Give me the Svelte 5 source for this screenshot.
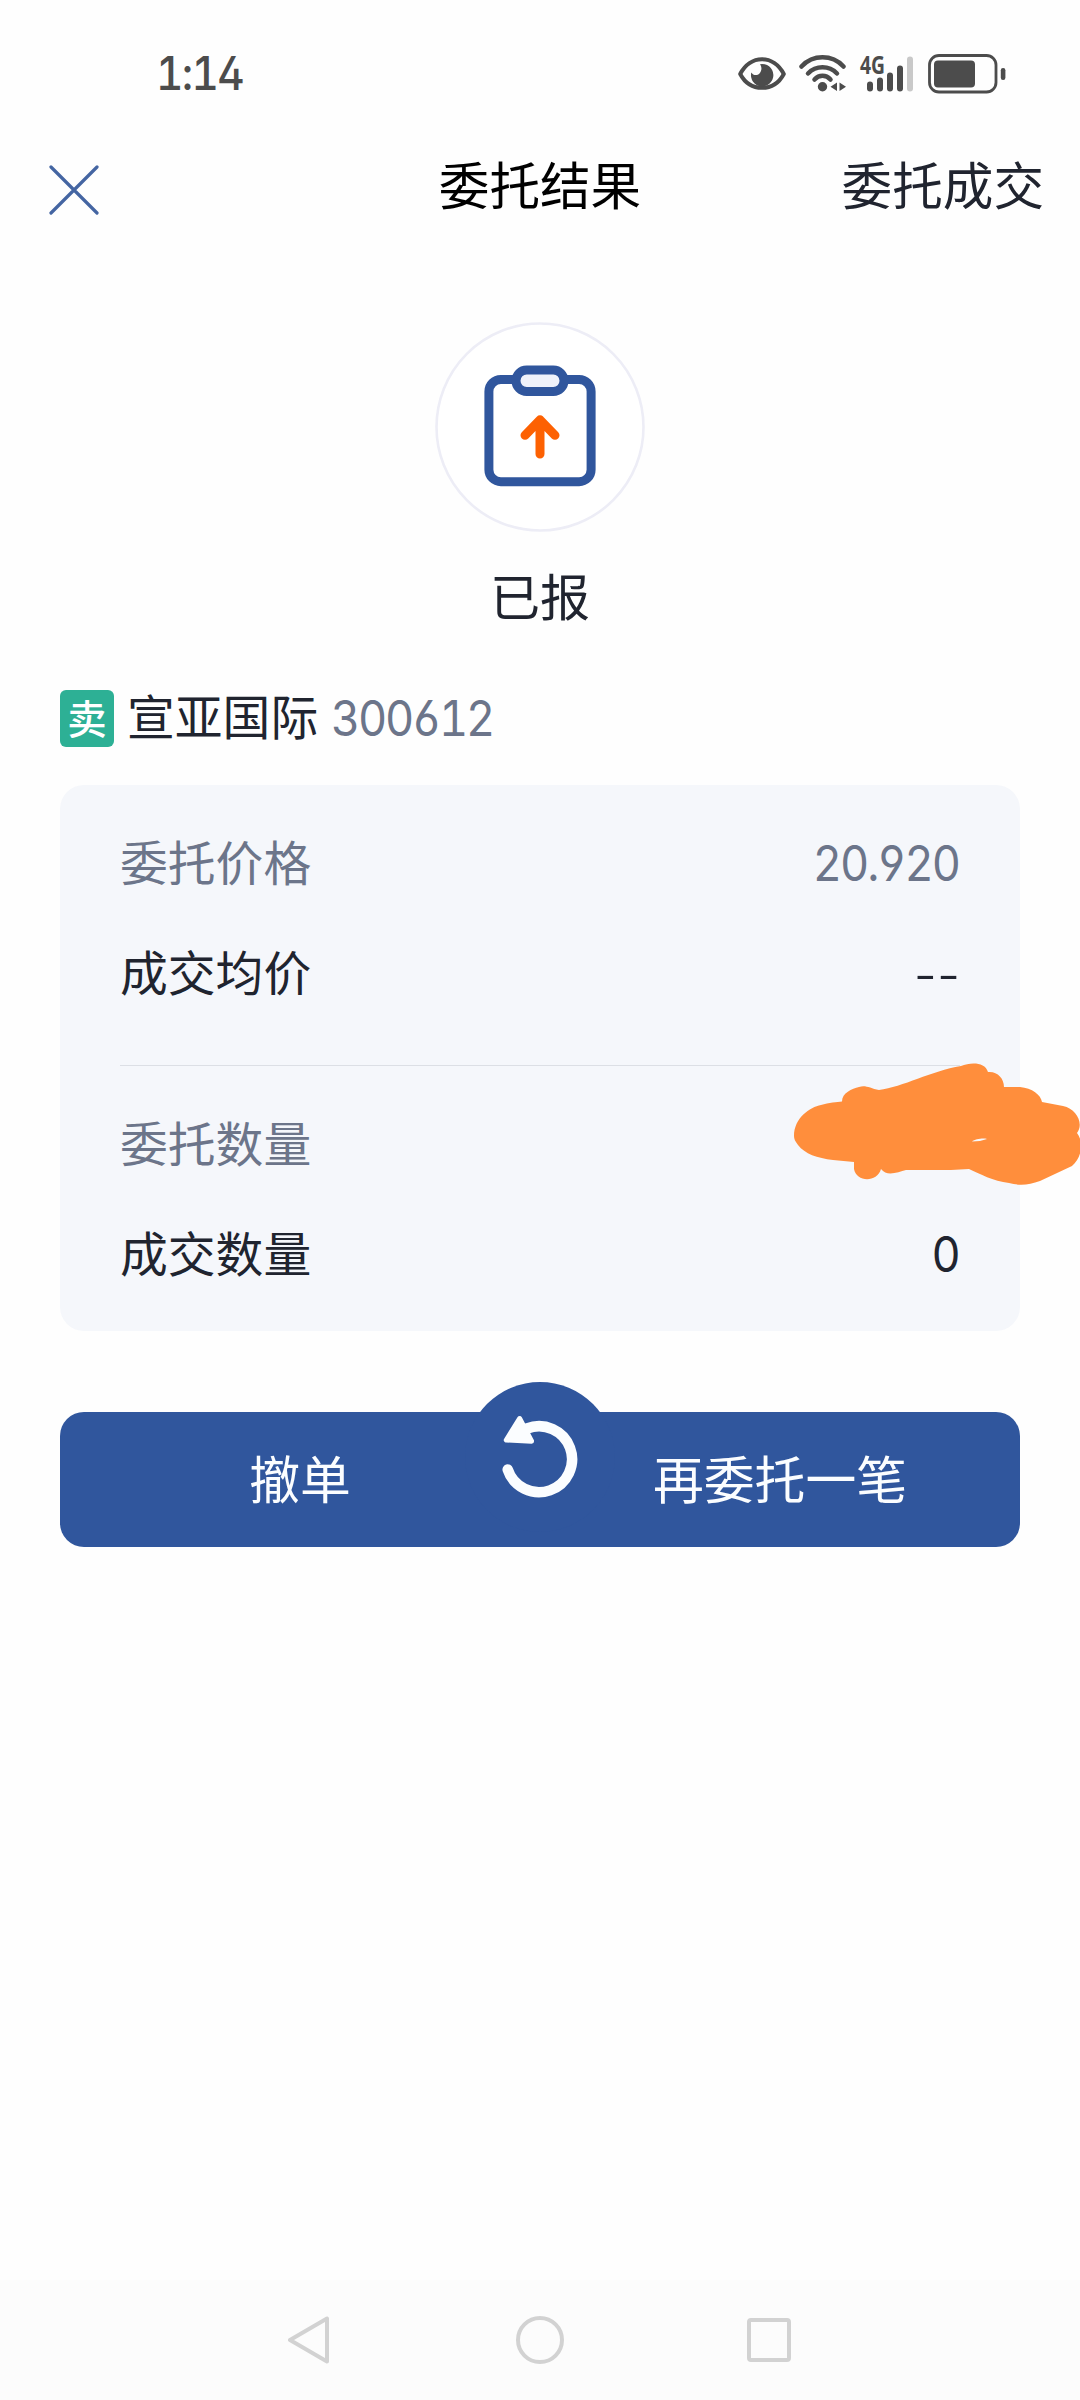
<script lang="ts">
  const groups = [
    [
      { label: '委托价格', value: '20.920', muted: true },
      { label: '成交均价', value: '--', muted: false }
    ],
    [
      { label: '委托数量', value: '', muted: true },
      { label: '成交数量', value: '0', muted: false }
    ]
  ];
</script>

<div class="screen">
  <div class="status">
    <span class="time num">1:14</span>
    <div class="indicators">
      <svg class="eye" width="48" height="34" viewBox="0 0 48 34">
        <path d="M2.2 17C7 8 15 2.2 24 2.2S41 8 45.8 17C41 26 33 30.8 24 30.8S7 26 2.2 17Z" fill="none" stroke="#4c4c4c" stroke-width="4" stroke-linejoin="round" />
        <path d="M22 7.2A11.2 11.2 0 1 1 13.3 15.5C15 18.5 19 19 21.5 16.5C24 13.8 24 10 22 7.2Z" fill="#4c4c4c" />
      </svg>
      <svg class="wifi" width="48" height="38" viewBox="0 0 48 38">
        <g fill="none" stroke="#4c4c4c" stroke-width="4.5" stroke-linecap="round">
          <path d="M2.5 11.5C14 -.7 33 -.7 44.5 11.5" />
          <path d="M9 18.500C17 10.3 30 10.3 38 18.5" />
          <path d="M15.5 24.5C20 19.5 27 19.5 31.5 24.5" />
        </g>
        <circle cx="23.5" cy="31.8" r="4.7" fill="#4c4c4c" />
        <path d="M38 27.500V36L31.5 31.8ZM40.5 27.500V36L47 31.8Z" fill="#4c4c4c" />
      </svg>
      <svg class="signal" width="56" height="38" viewBox="0 0 56 38">
        <text x="1" y="18.5" class="net" textLength="25" lengthAdjust="spacingAndGlyphs">4G</text>
        <g stroke="#4c4c4c" stroke-width="6" stroke-linecap="round">
          <path d="M11 29.500V33.500M21 25.500V33.500M31 20.500V33.500M41 13.500V33.500" />
          <path d="M51 4.500V33.500" stroke="#c9c9c9" />
        </g>
      </svg>
      <svg class="battery" width="78" height="40" viewBox="0 0 78 40">
        <rect x="1.5" y="1.5" width="66.5" height="36.5" rx="9.5" fill="none" stroke="#4c4c4c" stroke-width="2.8" />
        <rect x="6" y="6.500" width="41" height="27" rx="4" fill="#4c4c4c" />
        <rect x="72.8" y="14" width="4.6" height="12" rx="2.2" fill="#4c4c4c" />
      </svg>
    </div>
  </div>

  <header>
    <svg class="close" width="50" height="50" viewBox="0 0 50 50">
      <path d="M2 2L48 48M48 2L2 48" stroke="#4465a2" stroke-width="3.2" stroke-linecap="round" />
    </svg>
    <h1>委托结果</h1>
    <span class="link">委托成交</span>
  </header>

  <section class="result">
    <svg width="210" height="210" viewBox="0 0 210 210">
      <circle cx="105" cy="105" r="103.5" fill="#fff" stroke="#ededf6" stroke-width="2.6" />
      <rect x="53.9" y="57.5" width="102.2" height="102.2" rx="12" fill="none" stroke="#30569d" stroke-width="9" />
      <rect x="81" y="48" width="48" height="21.5" rx="10.7" fill="#eff2fa" stroke="#30569d" stroke-width="9" />
      <path d="M105 98.500V132M90 113.300L105 97.800L120 113.300" fill="none" stroke="#fd6102" stroke-width="9" stroke-linecap="round" stroke-linejoin="round" />
    </svg>
    <p>已报</p>
  </section>

  <div class="stock">
    <span class="badge">卖</span>
    <span class="name">宣亚国际</span>
    <span class="code num">300612</span>
  </div>

  <div class="card">
    {#each groups as rows}
      <div class="group">
        {#each rows as row}
          <div class="row" class:muted={row.muted}>
            <span class="label">{row.label}</span>
            {#if row.value === '--'}
              <span class="dashes">--</span>
            {:else}
              <span class="num">{row.value}</span>
            {/if}
          </div>
        {/each}
      </div>
    {/each}
    <svg class="scribble" width="288" height="124" viewBox="0 0 288 124">
      <path fill="#ff8e3c" fill-rule="evenodd" d="M1 70C1 52 17 41 28 39C36 36.500 44 36 49 35.500C49 27 59 22.500 66 21C72 18.500 77 22 86 24C110 21 138 5 168 0C178 -4 192 -4 195 6C204 5 211 12 211 21H227C239 22 248 29 249 36L270 40C284 43 291 58 284 67C291 76 289 91 279 100L247 115C236 119 227 120 216 117C200 115 187 108 176 103L158 104H113C105 106 94 111 88 103C84 117 63 116 61 103V96L40 94C24 92 12 88 5 79C2 75 1 73 1 70ZM179 75.500L187 75L194 73C190 72 182 73 179 75.500Z" />
    </svg>
  </div>

  <div class="actions">
    <span>撤单</span>
    <span>再委托一笔</span>
    <svg class="redo" width="150" height="150" viewBox="0 0 150 150">
      <circle cx="75" cy="75" r="75" fill="#30569d" />
      <path d="M42.700 87.500A33 33 0 1 0 62 46.500" fill="none" stroke="#fbfdff" stroke-width="10.5" stroke-linecap="round" />
      <path d="M54.600 36.500L41.300 58L66.600 59.200Z" fill="#fbfdff" stroke="#fbfdff" stroke-width="5" stroke-linejoin="round" />
    </svg>
  </div>

  <nav>
    <svg width="504" height="48" viewBox="0 0 504 48" fill="none" stroke="#d2d2d2" stroke-width="4" stroke-linejoin="round">
      <path d="M2 24L39 2.500V45.500Z" />
      <circle cx="252" cy="24" r="22" />
      <rect x="461" y="4" width="40" height="40" rx="2" />
    </svg>
  </nav>
</div>

<style>
  :global(body) {
    margin: 0;
    background: #fefefe;
  }
  .screen {
    width: 1080px;
    height: 2400px;
    display: flex;
    flex-direction: column;
    overflow: hidden;
    background: #fefefe;
    color: #20242f;
    font: 47.8px/70px 'Noto Sans CJK SC', sans-serif;
  }
  .num {
    font-family: Inter, sans-serif;
    font-size: 49px;
    letter-spacing: -2.4px;
    font-feature-settings: 'cv02', 'cv03', 'cv04', 'tnum';
    transform: scaleX(0.92);
    transform-origin: left;
  }
  .status {
    height: 146px;
    box-sizing: border-box;
    padding: 2px 74px 0 156px;
    display: flex;
    justify-content: space-between;
    align-items: center;
    color: #4c4c4c;
  }
  .time {
    padding-bottom: 2px;
    font-size: 46px;
    font-weight: 500;
    letter-spacing: -1.8px;
  }
  .indicators {
    display: flex;
    align-items: center;
    gap: 13px;
    padding-bottom: 1px;
  }
  .wifi {
    margin-right: -1px;
  }
  .signal,
  .scribble {
    overflow: visible;
  }
  .net {
    font: 700 25px 'Open Sans', sans-serif;
    fill: #4c4c4c;
  }
  header {
    height: 86px;
    padding: 0 36px;
    display: grid;
    grid-template-columns: 1fr auto 1fr;
    align-items: center;
    font-size: 50.6px;
  }
  .close {
    margin: 2px 0 0 13px;
  }
  h1 {
    margin: 0;
    padding-bottom: 13px;
    font: inherit;
    color: #000;
  }
  .link {
    justify-self: end;
    padding-bottom: 13px;
  }
  .result {
    display: flex;
    flex-direction: column;
    align-items: center;
    padding-top: 90px;
  }
  .result p {
    margin: 27px 0 1px;
    font-size: 50px;
  }
  .stock {
    display: flex;
    align-items: center;
    height: 57px;
    margin: 60px 60px 38px;
  }
  .badge {
    width: 54px;
    height: 57px;
    border-radius: 6px;
    background: #2db095;
    color: #fff;
    font-size: 39.5px;
    font-weight: 500;
    line-height: 54px;
    text-align: center;
  }
  .name {
    margin-left: 13px;
    padding-bottom: 8px;
  }
  .code {
    margin-left: 13px;
    color: #6c758a;
  }
  .card {
    position: relative;
    height: 546px;
    margin: 0 60px 81px;
    padding: 0 60px;
    box-sizing: border-box;
    border-radius: 24px;
    background: #f5f7fb;
  }
  .group {
    display: flex;
    flex-direction: column;
    gap: 40px;
    padding-top: 43px;
  }
  .group:first-child {
    height: 237px;
    border-bottom: 1px solid #dcdfe5;
  }
  .row {
    height: 70px;
    display: flex;
    align-items: center;
    justify-content: space-between;
  }
  .row .num {
    padding: 2px 1px 0 0;
    letter-spacing: -2.2px;
    transform-origin: right;
  }
  .label {
    padding-bottom: 5px;
  }
  .muted {
    color: #6c758a;
  }
  .dashes {
    padding-top: 4px;
    font-family: Inter, sans-serif;
    font-size: 51px;
    font-weight: 300;
  }
  .scribble {
    position: absolute;
    left: 733px;
    top: 281px;
  }
  .actions {
    position: relative;
    display: grid;
    grid-template-columns: 1fr 1fr;
    align-items: center;
    justify-items: center;
    height: 135px;
    box-sizing: border-box;
    margin: 0 60px;
    padding-bottom: 6px;
    border-radius: 24px;
    background: #30569d;
    color: #fbfdff;
    font-size: 50.8px;
  }
  .redo {
    position: absolute;
    left: 405px;
    top: -30px;
  }
  nav {
    display: flex;
    align-items: center;
    justify-content: center;
    height: 120px;
    margin-top: auto;
    background: #fcfcfc;
  }
</style>
